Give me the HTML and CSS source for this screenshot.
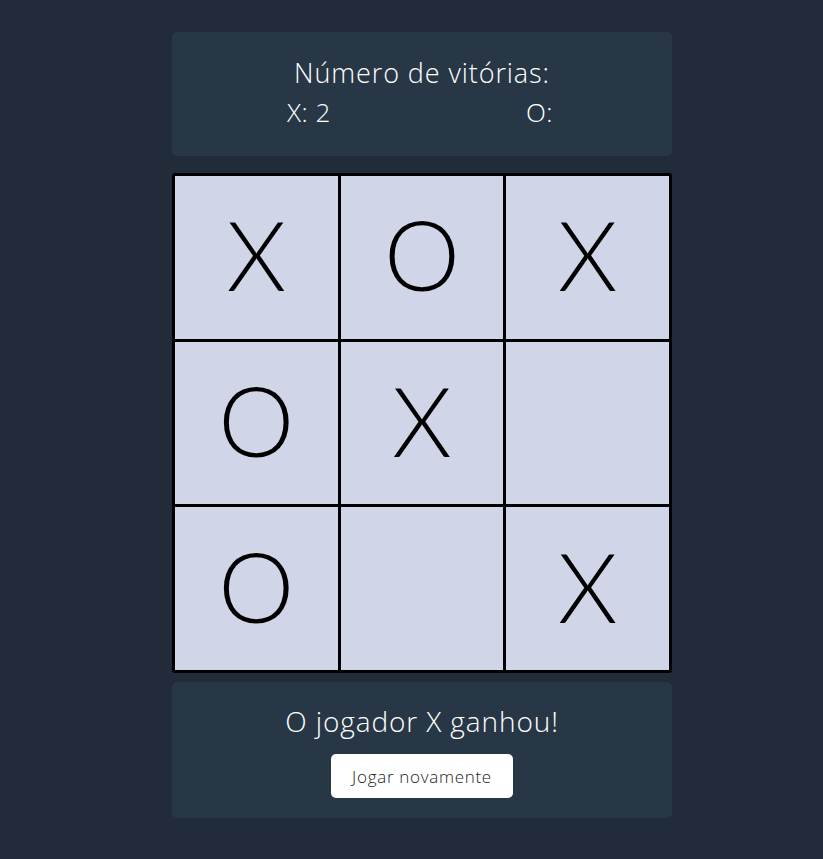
FILE: index.html
```html
<!DOCTYPE html>
<html lang="pt">
<head>
<meta charset="utf-8">
<title>Jogo da velha</title>
<link rel="stylesheet" href="styles.css">
</head>
<body>
<main class="page">
  <section class="card score">
    <h2 class="score-title">Número de vitórias:</h2>
    <div class="score-row">
      <span>X: 2</span>
      <span>O: </span>
    </div>
  </section>
  <section class="board">
    <div class="cell">X</div>
    <div class="cell">O</div>
    <div class="cell">X</div>
    <div class="cell">O</div>
    <div class="cell">X</div>
    <div class="cell"></div>
    <div class="cell">O</div>
    <div class="cell"></div>
    <div class="cell">X</div>
  </section>
  <section class="card result">
    <p class="result-text">O jogador X ganhou!</p>
    <button class="btn">Jogar novamente</button>
  </section>
</main>
</body>
</html>
```
FILE: styles.css
```css
* { box-sizing: border-box; }
html, body { margin: 0; padding: 0; }
body {
  background: #212b39;
  font-family: "Open Sans", "Lato", sans-serif;
  font-weight: 300;
  color: #fff;
  min-height: 859px;
}
.page {
  width: 500px;
  margin-left: 172px;
  padding-top: 32px;
  display: flex;
  flex-direction: column;
}
.card {
  background: #283746;
  border-radius: 5px;
  display: flex;
  flex-direction: column;
  align-items: center;
}
.score {
  height: 124px;
  padding-top: 22px;
}
.score-title {
  margin: 0;
  font-size: 27px;
  font-weight: 300;
  line-height: 38px;
  letter-spacing: 0.9px;
}
.score-row {
  width: 270px;
  padding-right: 4px;
  display: flex;
  justify-content: space-between;
  font-size: 26px;
  line-height: 38px;
  letter-spacing: 0.5px;
  margin-top: 1px;
}
.board {
  margin-top: 17px;
  width: 500px;
  height: 500px;
  background: #000;
  border-radius: 3px;
  padding: 3px;
  display: grid;
  grid-template-columns: repeat(3, 1fr);
  grid-template-rows: repeat(3, 1fr);
  gap: 3px;
}
.cell {
  background: #d0d5e8;
  color: #000;
  display: flex;
  align-items: center;
  justify-content: center;
  font-family: "Lato", sans-serif;
  font-size: 96px;
  font-weight: 300;
  padding-bottom: 7px;
}
.result {
  margin-top: 9px;
  height: 136px;
  padding-top: 19px;
}
.result-text {
  margin: 0;
  font-size: 28px;
  line-height: 40px;
  font-weight: 300;
  letter-spacing: 0.9px;
}
.btn {
  margin-top: 13px;
  width: 182px;
  height: 44px;
  border: none;
  border-radius: 5px;
  background: #fff;
  color: #222;
  font-family: inherit;
  font-weight: 300;
  font-size: 17px;
  letter-spacing: 0.7px;
}
```
